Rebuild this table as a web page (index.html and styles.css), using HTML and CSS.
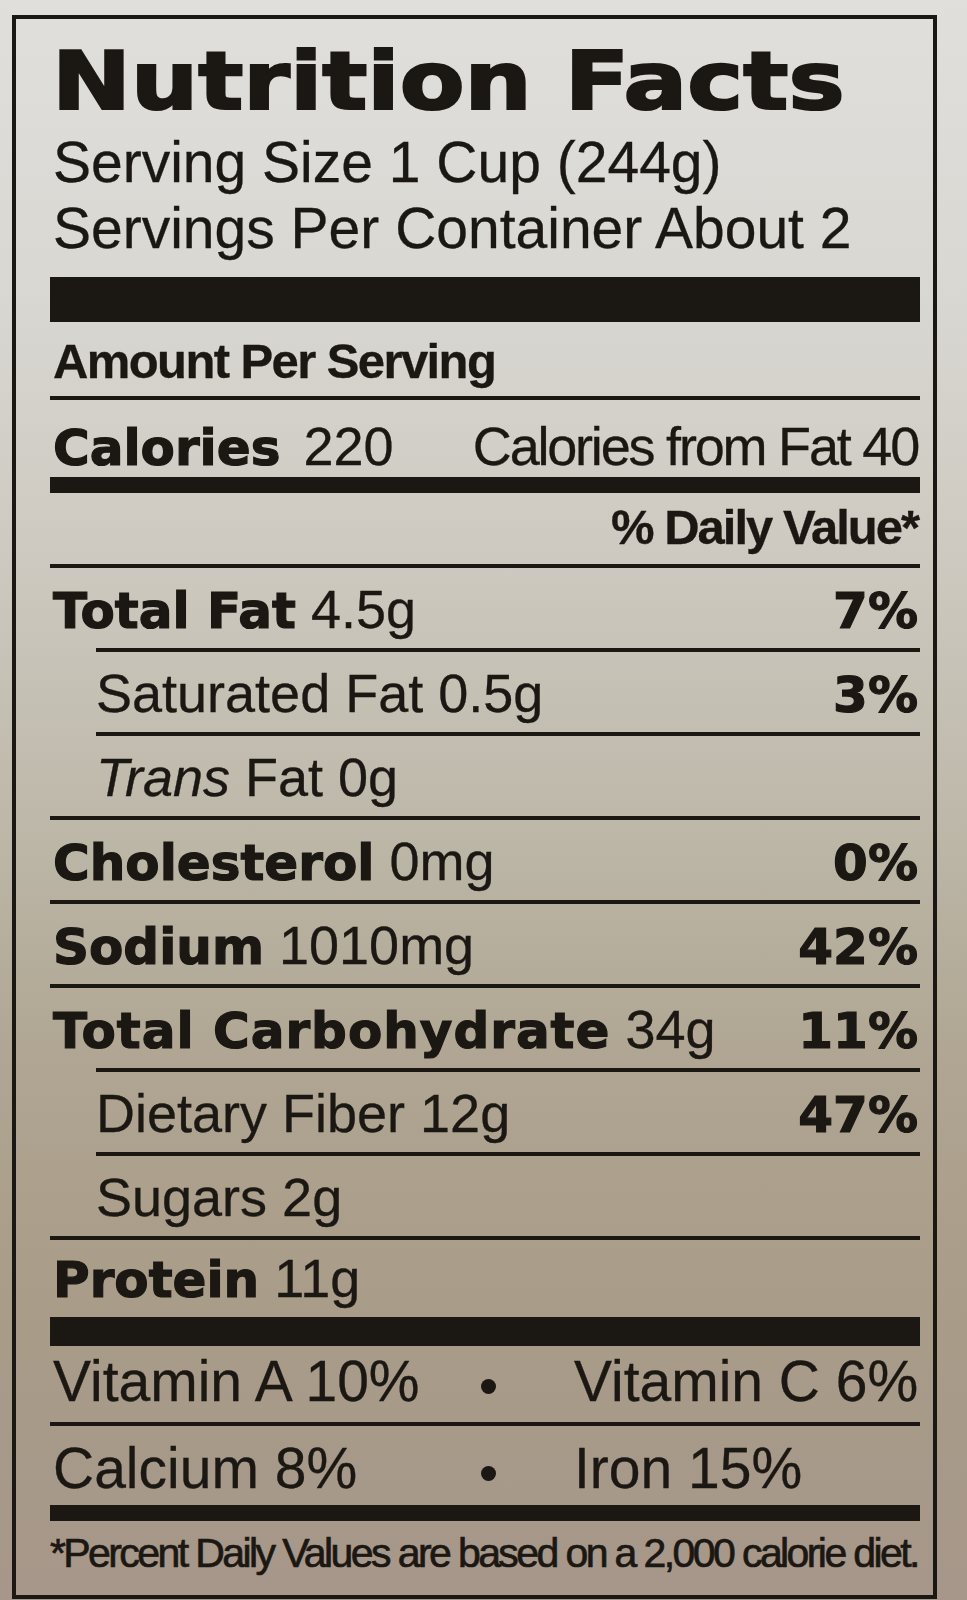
FILE: index.html
```html
<!DOCTYPE html>
<html lang="en">
<head>
<meta charset="utf-8">
<title>Nutrition Facts</title>
<link rel="stylesheet" href="styles.css">
</head>
<body>
<section class="label">
  <h1 class="title">Nutrition Facts</h1>
  <p class="serving">Serving Size 1 Cup (244g)</p>
  <p class="serving serving-2">Servings Per Container About 2</p>
  <div class="bar bar-big"></div>

  <div class="row row-amount"><span class="head">Amount Per Serving</span></div>
  <div class="row row-cal">
    <span><b>Calories</b> <span class="light">220</span></span>
    <span class="fromfat">Calories from Fat 40</span>
  </div>
  <div class="bar bar-mid"></div>
  <div class="row row-dv"><span></span><span class="head">% Daily Value*</span></div>

  <div class="row"><span><b>Total Fat</b> 4.5g</span><b>7%</b></div>
  <div class="row sub"><span>Saturated Fat 0.5g</span><b>3%</b></div>
  <div class="row sub"><span><i>Trans</i> Fat 0g</span></div>
  <div class="row"><span><b>Cholesterol</b> 0mg</span><b>0%</b></div>
  <div class="row"><span><b>Sodium</b> 1010mg</span><b>42%</b></div>
  <div class="row"><span><b class="wide">Total Carbohydrate</b> 34g</span><b>11%</b></div>
  <div class="row sub"><span>Dietary Fiber 12g</span><b>47%</b></div>
  <div class="row sub"><span>Sugars 2g</span></div>
  <div class="row row-protein"><span><b>Protein</b> 11g</span></div>
  <div class="bar bar-thick"></div>

  <div class="vit vit-1">
    <span>Vitamin A 10%</span><span class="dot"></span><span class="vit-r">Vitamin C 6%</span>
  </div>
  <div class="vit vit-2">
    <span>Calcium 8%</span><span class="dot"></span><span class="vit-r">Iron 15%</span>
  </div>
  <div class="bar bar-mid"></div>
  <p class="foot">*Percent Daily Values are based on a 2,000 calorie diet.</p>
</section>
</body>
</html>
```

FILE: styles.css
```css
* { box-sizing: border-box; }

html, body {
  margin: 0;
  padding: 0;
}

body {
  width: 967px;
  height: 1600px;
  overflow: hidden;
  color: #1b1713;
  font-family: "Liberation Sans", Arial, sans-serif;
  background:
    linear-gradient(180deg,
      #e0dfdb 0px,
      #d9d7d2 300px,
      #cdc9c0 560px,
      #bdb8a9 820px,
      #b0a693 1050px,
      #a99c88 1300px,
      #a6978a 1600px);
  padding-top: 15px;
  padding-left: 12px;
}

.label {
  width: 925px;
  border: 4px solid #1b1713;
  padding: 0 13px 0 34px;
}

.title {
  width: max-content;
  margin: 23px 0 0 2px;
  font-family: "DejaVu Sans", sans-serif;
  font-weight: 700;
  font-size: 80px;
  line-height: 1;
  -webkit-text-stroke: 2.2px #1b1713;
  transform: scaleX(1.18);
  transform-origin: left center;
  white-space: nowrap;
}

.serving {
  margin: 12px 0 0 3px;
  font-size: 57px;
  line-height: 1;
  white-space: nowrap;
  -webkit-text-stroke: 0.3px #1b1713;
}

.serving-2 { margin-top: 9px; }

.bar { background: #1b1713; }
.bar-big { height: 45px; margin-top: 20px; }
.bar-mid { height: 16px; }
.bar-thick { height: 29px; }

.row {
  display: flex;
  justify-content: space-between;
  align-items: flex-end;
  height: 84px;
  border-top: 4px solid #1b1713;
  padding: 0 2px 12px 3px;
  font-size: 54px;
  line-height: 1;
  white-space: nowrap;
  -webkit-text-stroke: 0.3px #1b1713;
}

.row b {
  font-family: "DejaVu Sans", sans-serif;
  font-weight: 700;
  font-size: 50px;
  -webkit-text-stroke: 1.2px #1b1713;
}

.row b.wide { letter-spacing: 1px; }

.row.sub {
  margin-left: 46px;
  padding-left: 0;
}

.row-amount {
  height: 74px;
  border-top: 0;
  padding-bottom: 10px;
}

.head {
  font-weight: 700;
  font-size: 49px;
  letter-spacing: -1.6px;
}

.row-cal {
  height: 81px;
  padding-bottom: 4px;
}

.light {
  font-weight: 400;
  margin-left: 8px;
}

.fromfat { letter-spacing: -2.2px; }

.row-dv {
  height: 71px;
  border-top: 0;
  padding-bottom: 12px;
}

.row-dv .head { letter-spacing: -2px; }

.row-protein { height: 81px; }

.vit {
  display: grid;
  grid-template-columns: 405px 60px 1fr;
  align-items: end;
  font-size: 57px;
  line-height: 1;
  white-space: nowrap;
  padding-left: 3px;
  -webkit-text-stroke: 0.3px #1b1713;
}

.vit-1 { height: 76px; padding-bottom: 12px; }
.vit-2 { height: 83px; padding-bottom: 8px; border-top: 4px solid #1b1713; }

.vit-r { padding-left: 56px; }

.dot {
  justify-self: center;
  width: 15px;
  height: 15px;
  border-radius: 50%;
  background: #1b1713;
  margin-bottom: 16px;
}

.foot {
  margin: 0;
  height: 74px;
  display: flex;
  align-items: flex-end;
  padding-bottom: 21px;
  font-size: 41px;
  line-height: 1;
  white-space: nowrap;
  letter-spacing: -2.6px;
  -webkit-text-stroke: 0.7px #1b1713;
}
```
